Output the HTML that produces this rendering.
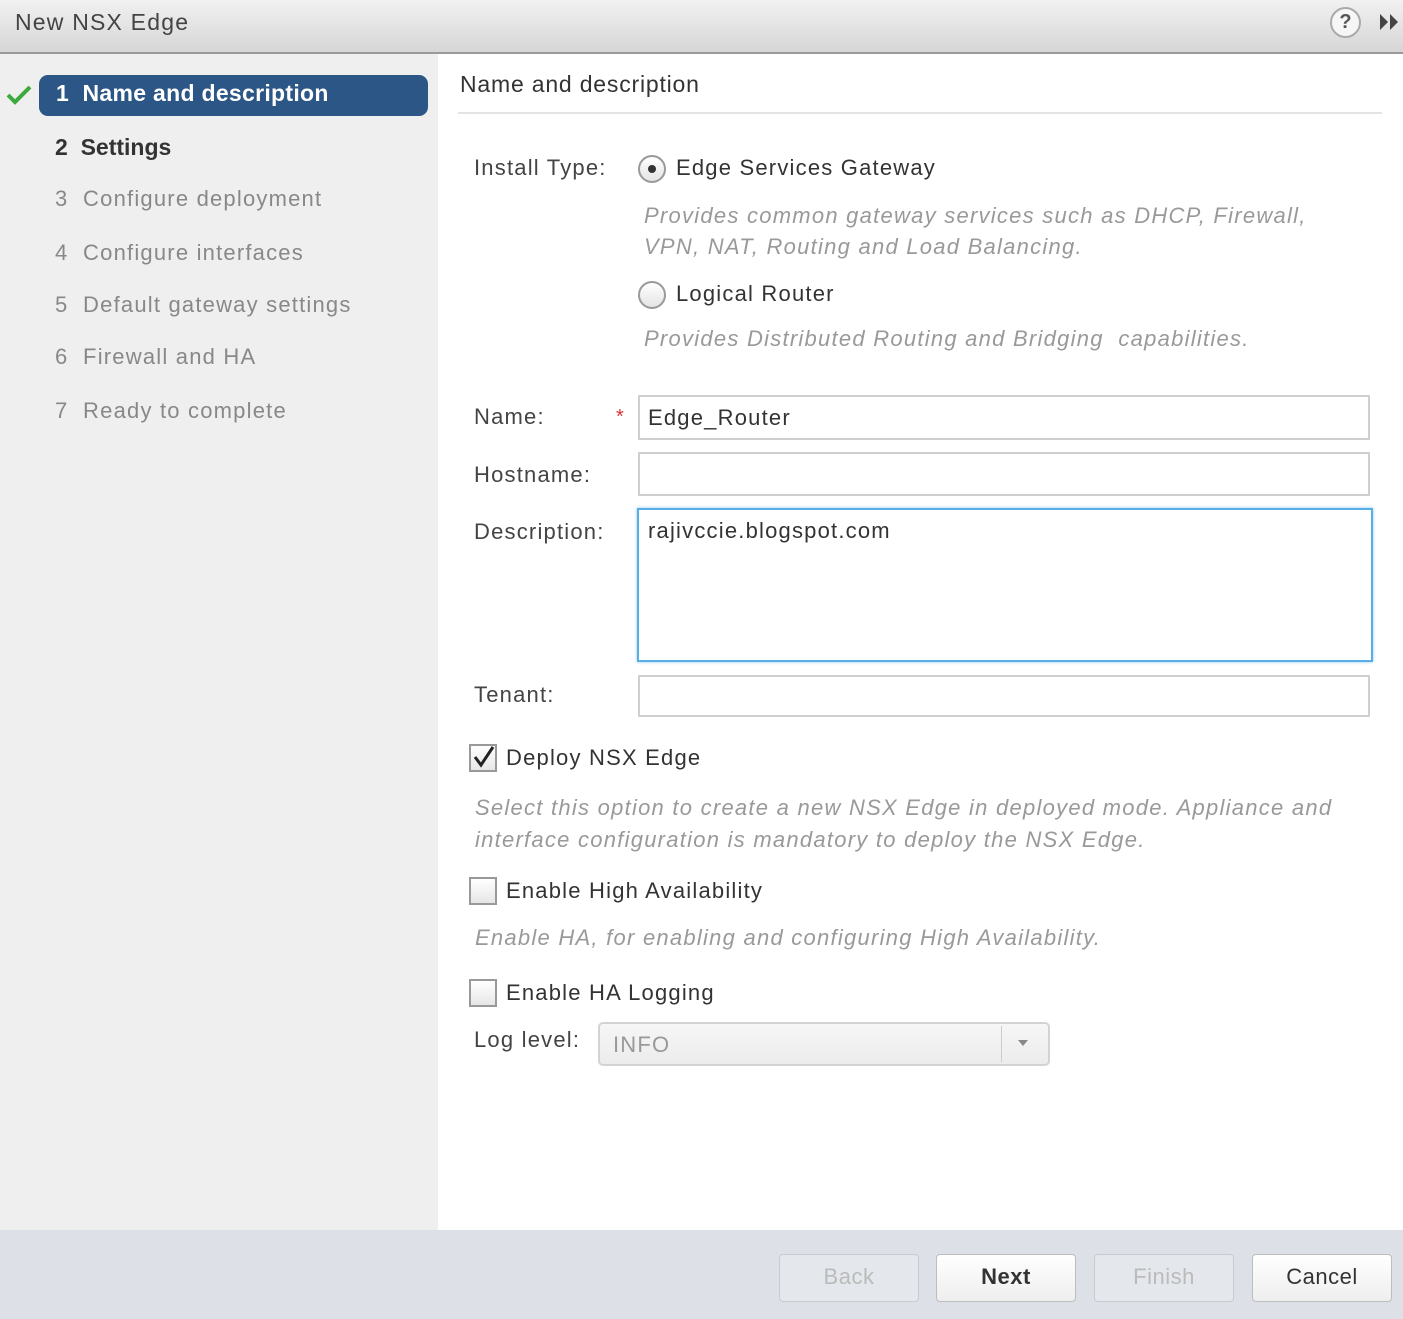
<!DOCTYPE html>
<html><head><meta charset="utf-8"><style>
*{box-sizing:border-box;margin:0;padding:0}
body{width:1403px;height:1319px;position:relative;overflow:hidden;background:#fff;font-family:"Liberation Sans",Arial,sans-serif;color:#333;font-size:22px;letter-spacing:1.2px}
.a{position:absolute;white-space:nowrap}
.hdr{left:0;top:0;width:1403px;height:54px;background:linear-gradient(#f1f1f1,#d6d6d6);border-bottom:2px solid #9a9a9a}
.left{left:0;top:54px;width:438px;height:1176px;background:#efefef}
.step{left:55px;font-size:22px;color:#888}
.lbl{left:474px;font-size:22px;color:#444}
.it{font-style:italic;color:#999;font-size:22px;letter-spacing:1.25px}
.inp{background:#fff;border:2px solid #cfcfcf;left:638px;width:732px}
.cb{width:28px;height:28px;border:2px solid #999;background:linear-gradient(#fff,#e6e6e6);left:469px}
.radio{width:28px;height:28px;border-radius:50%;border:2px solid #999;background:linear-gradient(#fff,#e4e4e4);left:638px}
.btn{top:1254px;height:48px;width:140px;border:1px solid #bdbdbd;border-radius:4px;background:linear-gradient(#fff,#eeeeee);text-align:center;line-height:44px;font-size:22px;letter-spacing:0.5px}
.dis{color:#bbb;background:#e4e7eb;border-color:#c8ccd0}
</style></head><body>
<div class="a hdr"></div>
<div class="a" style="left:15px;top:9px;font-size:23px;color:#444">New NSX Edge</div>
<div class="a" style="left:1330px;top:7px;width:31px;height:31px;border-radius:50%;border:2px solid #aaa;background:#f6f6f6;text-align:center;font-weight:bold;font-size:20px;line-height:27px;color:#555;letter-spacing:0">?</div>
<svg class="a" style="left:1378px;top:12px" width="24" height="20"><path d="M2 2L10 10L2 18Z M12 2L20 10L12 18Z" fill="#444"/></svg>
<div class="a left"></div>
<svg class="a" style="left:6px;top:84px" width="26" height="22"><path d="M2 11L9 18L24 3" stroke="#3caa3c" stroke-width="4" fill="none"/></svg>
<div class="a" style="left:39px;top:75px;width:389px;height:41px;background:#2b5685;border-radius:9px"></div>
<div class="a" style="left:56px;top:80px;color:#fff;font-weight:bold;font-size:23px;letter-spacing:0.3px">1&nbsp; Name and description</div>
<div class="a" style="left:55px;top:134px;color:#333;font-weight:bold;font-size:23px;letter-spacing:0">2&nbsp; Settings</div>
<div class="a step" style="top:186px">3&nbsp; Configure deployment</div>
<div class="a step" style="top:240px">4&nbsp; Configure interfaces</div>
<div class="a step" style="top:292px">5&nbsp; Default gateway settings</div>
<div class="a step" style="top:344px">6&nbsp; Firewall and HA</div>
<div class="a step" style="top:398px">7&nbsp; Ready to complete</div>

<div class="a" style="left:460px;top:71px;font-size:23px;color:#333;letter-spacing:0.8px">Name and description</div>
<div class="a" style="left:458px;top:112px;width:924px;height:2px;background:#e4e4e4"></div>

<div class="a lbl" style="top:155px">Install Type:</div>
<div class="a radio" style="top:155px"><div style="width:8px;height:8px;border-radius:50%;background:#333;margin:8px"></div></div>
<div class="a" style="left:676px;top:155px">Edge Services Gateway</div>
<div class="a it" style="left:644px;top:200px;line-height:31px">Provides common gateway services such as DHCP, Firewall,<br>VPN, NAT, Routing and Load Balancing.</div>
<div class="a radio" style="top:281px"></div>
<div class="a" style="left:676px;top:281px">Logical Router</div>
<div class="a it" style="left:644px;top:326px">Provides Distributed Routing and Bridging&nbsp; capabilities.</div>

<div class="a lbl" style="top:404px">Name:</div>
<div class="a" style="left:616px;top:406px;color:#d33;font-size:20px">*</div>
<div class="a inp" style="top:395px;height:45px"></div>
<div class="a" style="left:648px;top:405px">Edge_Router</div>
<div class="a lbl" style="top:462px">Hostname:</div>
<div class="a inp" style="top:452px;height:44px"></div>
<div class="a lbl" style="top:519px">Description:</div>
<div class="a inp" style="top:508px;height:154px;left:637px;width:736px;border:2px solid #5aaee6;box-shadow:0 0 3px #8cc8f0"></div>
<div class="a" style="left:648px;top:518px">rajivccie.blogspot.com</div>
<div class="a lbl" style="top:682px">Tenant:</div>
<div class="a inp" style="top:675px;height:42px"></div>

<div class="a cb" style="top:744px"></div>
<svg class="a" style="left:471px;top:744px" width="26" height="26"><path d="M4 13L10 21L22 3" stroke="#222" stroke-width="3" fill="none"/></svg>
<div class="a" style="left:506px;top:745px">Deploy NSX Edge</div>
<div class="a it" style="left:475px;top:792px;line-height:32px">Select this option to create a new NSX Edge in deployed mode. Appliance and<br>interface configuration is mandatory to deploy the NSX Edge.</div>
<div class="a cb" style="top:877px"></div>
<div class="a" style="left:506px;top:878px">Enable High Availability</div>
<div class="a it" style="left:475px;top:925px">Enable HA, for enabling and configuring High Availability.</div>
<div class="a cb" style="top:979px"></div>
<div class="a" style="left:506px;top:980px">Enable HA Logging</div>
<div class="a lbl" style="top:1027px">Log level:</div>
<div class="a" style="left:598px;top:1022px;width:452px;height:44px;border:2px solid #d3d3d3;border-radius:5px;background:linear-gradient(#f6f6f6,#ececec)"></div>
<div class="a" style="left:613px;top:1032px;color:#999">INFO</div>
<div class="a" style="left:1001px;top:1026px;width:1px;height:36px;background:#ccc"></div>
<svg class="a" style="left:1018px;top:1040px" width="12" height="8"><path d="M0 0H10L5 6Z" fill="#888"/></svg>

<div class="a" style="left:0;top:1230px;width:1403px;height:89px;background:#dde1e7"></div>
<div class="a btn dis" style="left:779px">Back</div>
<div class="a btn" style="left:936px;font-weight:bold;color:#333">Next</div>
<div class="a btn dis" style="left:1094px">Finish</div>
<div class="a btn" style="left:1252px;color:#333">Cancel</div>
</body></html>
